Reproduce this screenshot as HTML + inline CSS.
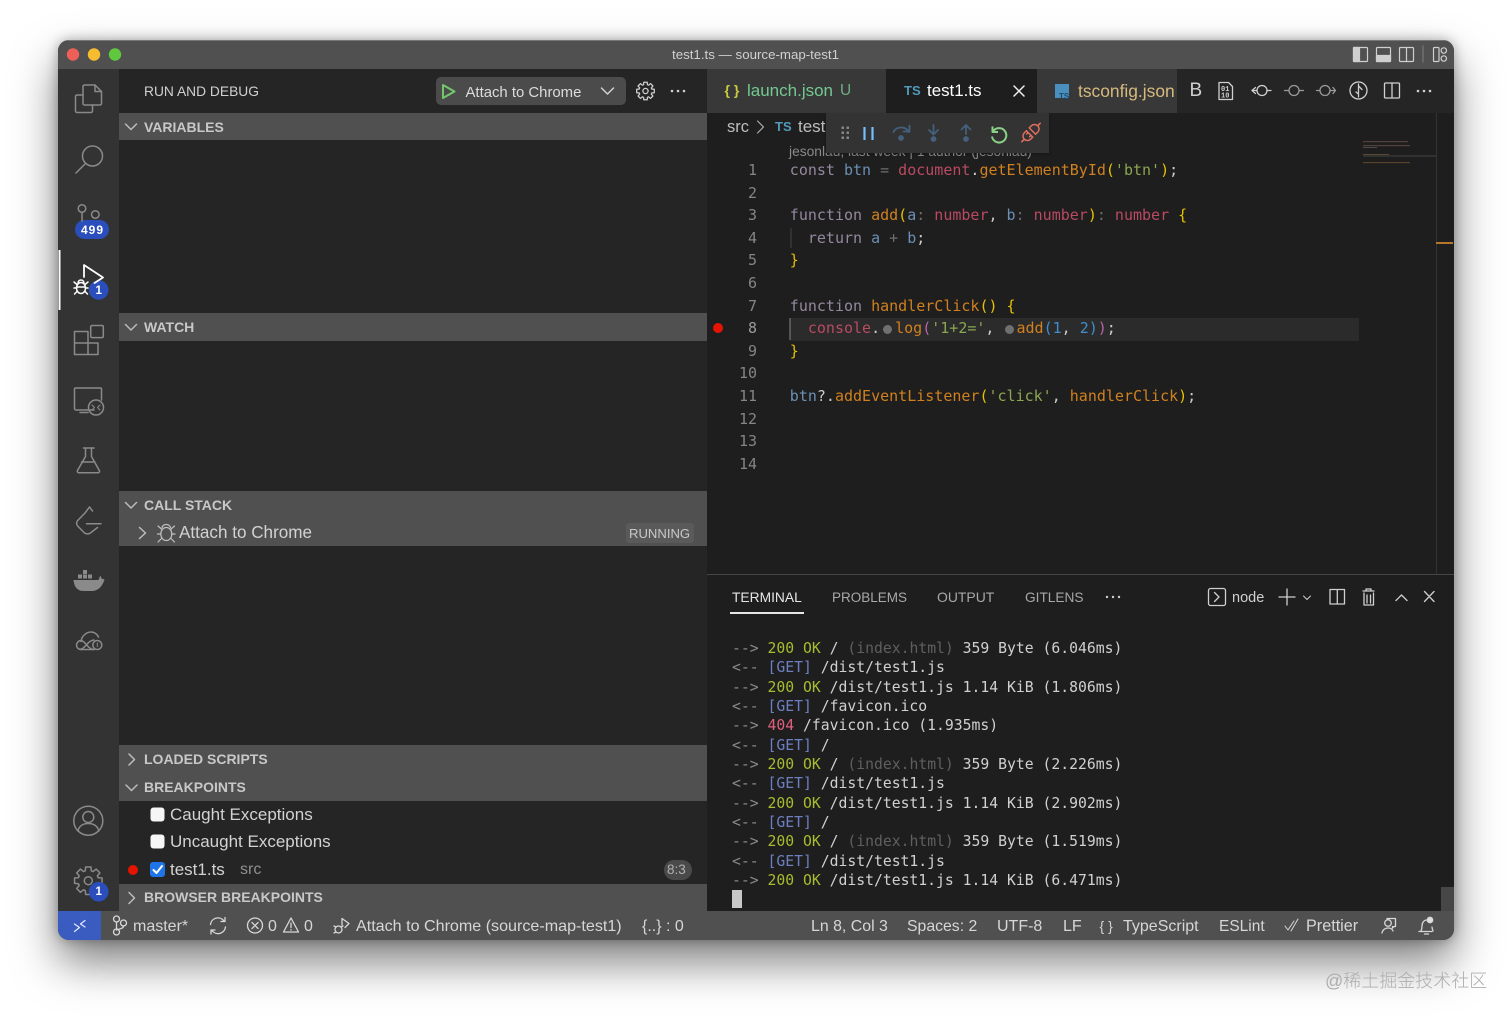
<!DOCTYPE html>
<html lang="en"><head><meta charset="utf-8"><title>VS Code</title>
<style>
*{box-sizing:border-box}
html,body{margin:0;padding:0;width:1512px;height:1017px;overflow:hidden;background:#fff}
body{position:relative;font-family:"Liberation Sans",sans-serif;color:#ccc}
.b{position:absolute}
.t{position:absolute;white-space:pre;line-height:20px;height:20px}
.h{position:absolute;left:144px;font-weight:bold;font-size:14px;color:#c8c8c8;line-height:20px;white-space:pre}
.s{font-size:16px;color:#d6d6d6;margin-top:-9.5px}
.c{position:absolute;left:789.8px;font:15px/22.6px "DejaVu Sans Mono",monospace;white-space:pre;color:#ccc}
.n{position:absolute;width:30px;left:727px;text-align:right;font:15px/22.6px "DejaVu Sans Mono",monospace;color:#858585}
.l{position:absolute;left:732px;font:14.75px/19.33px "DejaVu Sans Mono",monospace;white-space:pre;color:#d0d0d0;letter-spacing:-.01px;margin-top:.7px}
.k{color:#94889f}.o{color:#d0801f}.v{color:#6b8fb5}.r{color:#b94a62}.g{color:#8ba650}.y{color:#e5c100}.p{color:#6e6e6e}.m{color:#b565a8}.u{color:#3f8fd0}
.a{color:#8a8a8a}.q{color:#a8bc2e}.w{color:#6d7fc0}.x{color:#5f5f5f}.e{color:#e0607e}
.d{display:inline-block;width:9px;height:9px;border-radius:50%;background:#707070;vertical-align:-1px}
</style></head><body>
<div class="b" style="left:58px;top:40px;width:1396px;height:900px;border-radius:11px;background:#252525;box-shadow:0 22px 44px rgba(0,0,0,.5),0 0 12px rgba(0,0,0,.3);overflow:hidden">
<div class="b" style="left:0;top:0;width:1396px;height:29px;background:#505050;border-top:1px solid #777"></div>
<div class="b" style="left:0;top:29px;width:61px;height:842px;background:#333"></div>
<div class="b" style="left:61px;top:29px;width:588px;height:842px;background:#252525"></div>
<div class="b" style="left:61px;top:73px;width:588px;height:27px;background:#505050"></div>
<div class="b" style="left:61px;top:273px;width:588px;height:28px;background:#505050"></div>
<div class="b" style="left:61px;top:451px;width:588px;height:55px;background:#505050"></div>
<div class="b" style="left:61px;top:705px;width:588px;height:56px;background:#505050"></div>
<div class="b" style="left:61px;top:844px;width:588px;height:27px;background:#505050"></div>
<div class="b" style="left:649px;top:29px;width:747px;height:507px;background:#1e1e1e"></div>
<div class="b" style="left:649px;top:29px;width:747px;height:44px;background:#252525"></div>
<div class="b" style="left:649px;top:29px;width:470px;height:44px;background:#383838"></div>
<div class="b" style="left:828px;top:29px;width:151px;height:44px;background:#1e1e1e"></div>
<div class="b" style="left:732px;top:278px;width:569px;height:22.6px;background:#2b2b2b"></div>
<div class="b" style="left:649px;top:534px;width:747px;height:337px;background:#1e1e1e;border-top:1px solid #454545"></div>
<div class="b" style="left:1378px;top:73px;width:1px;height:461px;background:#333"></div>
<div class="b" style="left:1378px;top:202px;width:17px;height:2px;background:#b5762a"></div>
<div class="b" style="left:1383px;top:847px;width:13px;height:24px;background:#474747"></div>
<div class="b" style="left:0;top:871px;width:1396px;height:29px;background:#505050"></div>
<div class="b" style="left:0;top:871px;width:43px;height:29px;background:#3a5bc0"></div>
</div>
<div class="b" style="left:436px;top:77px;width:190px;height:28px;border-radius:5px;background:#4b4b4b"></div>
<div class="t" style="left:672px;top:45px;font-size:13.3px;color:#d0d0d0">test1.ts — source-map-test1</div>
<div class="t" style="left:144px;top:81.500px;font-size:13.8px;color:#d0d0d0">RUN AND DEBUG</div>
<div class="t" style="left:465.500px;top:82.500px;font-size:14.9px;color:#dcdcdc">Attach to Chrome</div>
<div class="h" style="top:117px">VARIABLES</div>
<div class="h" style="top:317px">WATCH</div>
<div class="h" style="top:495px">CALL STACK</div>
<div class="t" style="left:179px;top:523px;font-size:17.1px;color:#d2d2d2">Attach to Chrome</div>
<div class="b" style="left:626px;top:523px;width:68px;height:20px;border-radius:3px;background:#5a5a5a"></div>
<div class="t" style="left:629px;top:523.500px;font-size:13.1px;color:#c8c8c8">RUNNING</div>
<div class="h" style="top:749px">LOADED SCRIPTS</div>
<div class="h" style="top:777px">BREAKPOINTS</div>
<div class="t" style="left:170px;top:805px;font-size:17px;color:#d2d2d2">Caught Exceptions</div>
<div class="t" style="left:170px;top:832px;font-size:17px;color:#d2d2d2">Uncaught Exceptions</div>
<div class="t" style="left:170px;top:860px;font-size:17px;color:#d2d2d2">test1.ts</div>
<div class="t" style="left:240px;top:860px;font-size:16px;color:#8f8f8f">src</div>
<div class="b" style="left:664px;top:860px;width:28px;height:20px;border-radius:10px;background:#4a4a4a"></div>
<div class="t" style="left:667px;top:860px;font-size:13.5px;color:#b0b0b0">8:3</div>
<div class="h" style="top:887px">BROWSER BREAKPOINTS</div>
<div class="t" style="left:747px;top:81px;font-size:17px;color:#73c991">launch.json</div>
<div class="t" style="left:840px;top:81px;font-size:15.500px;color:#6fae85">U</div>
<div class="t" style="left:927px;top:81px;font-size:16.900px;color:#fff">test1.ts</div>
<div class="t" style="left:1078px;top:81px;font-size:17.400px;color:#d7ba7d">tsconfig.json</div>
<div class="t" style="left:904px;top:81px;font-size:13px;font-weight:bold;color:#519aba">TS</div>
<div class="t" style="left:724.500px;top:80px;font-size:14px;font-weight:bold;color:#cbcb41">{ }</div>
<div class="t" style="left:727px;top:117px;font-size:16.500px;color:#bdbdbd">src</div>
<div class="t" style="left:775px;top:117px;font-size:13px;font-weight:bold;color:#519aba">TS</div>
<div class="t" style="left:798px;top:117px;font-size:17px;color:#bdbdbd;width:28px;overflow:hidden">test1.ts</div>
<div class="b" style="left:1055px;top:84px;width:14px;height:14px;background:#4a8fbd"></div>
<div class="t" style="left:1059px;top:83px;font-size:8px;font-weight:bold;color:#1c4d6f;padding-top:4px">TS</div>
<div class="t" style="left:1189.500px;top:80.700px;font-size:19px;color:#d0d0d0">B</div>
<div class="t" style="left:789px;top:141.500px;font-size:13.800px;color:#8a8a8a">jesonlau, last week | 1 author (jesonlau)</div>
<div class="b" style="left:826px;top:113px;width:223px;height:39.500px;background:#333;box-shadow:0 1px 3px rgba(0,0,0,.25)"></div>
<div class="n" style="top:159px">1</div><div class="n" style="top:181.6px">2</div><div class="n" style="top:204.2px">3</div><div class="n" style="top:226.8px">4</div><div class="n" style="top:249.4px">5</div><div class="n" style="top:272px">6</div><div class="n" style="top:294.6px">7</div><div class="n" style="top:317.2px;color:#9a9a9a">8</div><div class="n" style="top:339.8px">9</div><div class="n" style="top:362.4px">10</div><div class="n" style="top:385px">11</div><div class="n" style="top:407.6px">12</div><div class="n" style="top:430.2px">13</div><div class="n" style="top:452.8px">14</div>
<div class="c" style="top:159px"><span class="k">const</span> <span class="v">btn</span> <span class="p">=</span> <span class="r">document</span>.<span class="o">getElementById</span><span class="y">(</span><span class="g">'btn'</span><span class="y">)</span>;</div>
<div class="c" style="top:204.2px"><span class="k">function</span> <span class="o">add</span><span class="y">(</span><span class="v">a</span><span class="p">:</span> <span class="r">number</span>, <span class="v">b</span><span class="p">:</span> <span class="r">number</span><span class="y">)</span><span class="p">:</span> <span class="r">number</span> <span class="y">{</span></div>
<div class="c" style="top:226.8px">  <span class="k">return</span> <span class="v">a</span> <span class="p">+</span> <span class="v">b</span>;</div>
<div class="c" style="top:249.4px"><span class="y">}</span></div>
<div class="c" style="top:294.6px"><span class="k">function</span> <span class="o">handlerClick</span><span class="y">()</span> <span class="y">{</span></div>
<div class="c" style="top:317.2px">  <span class="r">console</span>.<span style="display:inline-block;width:15px;text-align:center"><i class="d"></i></span><span class="o">log</span><span class="m">(</span><span class="g">'1+2='</span>, <span style="display:inline-block;width:13px;text-align:center"><i class="d"></i></span><span class="o">add</span><span class="u">(1</span>, <span class="u">2)</span><span class="m">)</span>;</div>
<div class="c" style="top:339.8px"><span class="y">}</span></div>
<div class="c" style="top:385px"><span class="v">btn</span>?.<span class="o">addEventListener</span><span class="y">(</span><span class="g">'click'</span>, <span class="o">handlerClick</span><span class="y">)</span>;</div>
<div class="t" style="left:732px;top:588px;font-size:13.800px;color:#e6e6e6">TERMINAL</div>
<div class="t" style="left:832px;top:588px;font-size:13.500px;color:#a8a8a8">PROBLEMS</div>
<div class="t" style="left:937px;top:587px;font-size:13.950px;color:#a8a8a8">OUTPUT</div>
<div class="t" style="left:1025px;top:588px;font-size:13.700px;color:#a8a8a8">GITLENS</div>
<div class="b" style="left:730px;top:612px;width:74px;height:1.500px;background:#e6e6e6"></div>
<div class="t" style="left:1232px;top:588px;font-size:14.500px;color:#d0d0d0">node</div>
<div class="l" style="top:638.5px"><span class="a">--&gt;</span> <span class="q">200 OK</span> / <span class="x">(index.html)</span> 359 Byte (6.046ms)</div>
<div class="l" style="top:657.8px"><span class="a">&lt;--</span> <span class="w">[GET]</span> /dist/test1.js</div>
<div class="l" style="top:677.2px"><span class="a">--&gt;</span> <span class="q">200 OK</span> /dist/test1.js 1.14 KiB (1.806ms)</div>
<div class="l" style="top:696.5px"><span class="a">&lt;--</span> <span class="w">[GET]</span> /favicon.ico</div>
<div class="l" style="top:715.8px"><span class="a">--&gt;</span> <span class="e">404</span> /favicon.ico (1.935ms)</div>
<div class="l" style="top:735.2px"><span class="a">&lt;--</span> <span class="w">[GET]</span> /</div>
<div class="l" style="top:754.5px"><span class="a">--&gt;</span> <span class="q">200 OK</span> / <span class="x">(index.html)</span> 359 Byte (2.226ms)</div>
<div class="l" style="top:773.8px"><span class="a">&lt;--</span> <span class="w">[GET]</span> /dist/test1.js</div>
<div class="l" style="top:793.2px"><span class="a">--&gt;</span> <span class="q">200 OK</span> /dist/test1.js 1.14 KiB (2.902ms)</div>
<div class="l" style="top:812.5px"><span class="a">&lt;--</span> <span class="w">[GET]</span> /</div>
<div class="l" style="top:831.8px"><span class="a">--&gt;</span> <span class="q">200 OK</span> / <span class="x">(index.html)</span> 359 Byte (1.519ms)</div>
<div class="l" style="top:851.2px"><span class="a">&lt;--</span> <span class="w">[GET]</span> /dist/test1.js</div>
<div class="l" style="top:870.5px"><span class="a">--&gt;</span> <span class="q">200 OK</span> /dist/test1.js 1.14 KiB (6.471ms)</div>
<div class="b" style="left:732px;top:890px;width:10px;height:18px;background:#c8c8c8"></div>
<div class="t s" style="left:133px;top:926px">master*</div>
<div class="t s" style="left:268px;top:926px">0</div>
<div class="t s" style="left:304px;top:926px">0</div>
<div class="t s" style="left:356px;top:925px;font-size:16.100px">Attach to Chrome (source-map-test1)</div>
<div class="t s" style="left:642px;top:926px">{..} : 0</div>
<div class="t s" style="left:811px;top:926px;font-size:15.900px">Ln 8, Col 3</div>
<div class="t s" style="left:907px;top:926px;font-size:15.800px">Spaces: 2</div>
<div class="t s" style="left:997px;top:926px">UTF-8</div>
<div class="t s" style="left:1063px;top:926px">LF</div>
<div class="t s" style="left:1099.500px;top:925px;font-size:14px">{ }</div>
<div class="t s" style="left:1123px;top:926px">TypeScript</div>
<div class="t s" style="left:1219px;top:926px;font-size:15.500px">ESLint</div>
<div class="t s" style="left:1306px;top:925px;font-size:16.200px">Prettier</div>
<div class="b" style="left:75px;top:220px;width:33.500px;height:19px;border-radius:10px;background:#2a4fbd"></div>
<div class="t" style="left:81px;top:220px;font-size:12px;font-weight:bold;color:#fff;letter-spacing:1px">499</div>
<div class="t" style="left:1325px;top:971px;font-size:18px;color:#adadad;font-family:'Liberation Sans','Noto Sans CJK SC',sans-serif;font-weight:300">@稀土掘金技术社区</div>
<svg class="b" style="left:0;top:0" width="1512" height="1017" viewBox="0 0 1512 1017" fill="none" stroke="#8f8f8f" stroke-width="1.5" stroke-linecap="round" stroke-linejoin="round">
<defs><path id="gr" d="M-2.67-13.74L2.67-13.74 3.01-9.85 4.84-9.09 7.83-11.61 11.61-7.83 9.09-4.84 9.85-3.01 13.74-2.67 13.74 2.67 9.85 3.01 9.09 4.84 11.61 7.83 7.83 11.61 4.84 9.09 3.01 9.85 2.67 13.74-2.67 13.74-3.01 9.85-4.84 9.09-7.83 11.61-11.61 7.83-9.09 4.84-9.85 3.01-13.74 2.67-13.74-2.67-9.85-3.01-9.09-4.84-11.61-7.83-7.83-11.61-4.84-9.09-3.01-9.85z"/></defs>
<circle cx="73" cy="54.500" r="6.200" fill="#ee5f57" stroke="none"/><circle cx="94" cy="54.500" r="6.200" fill="#f5bd2f" stroke="none"/><circle cx="115" cy="54.500" r="6.200" fill="#5fc83f" stroke="none"/>
<g stroke="#cfcfcf" stroke-width="1.200"><rect x="1353.500" y="47.500" width="14" height="14" rx="1"/><rect x="1353.500" y="47.500" width="6" height="14" fill="#cfcfcf"/><rect x="1376.500" y="47.500" width="14" height="14" rx="1"/><rect x="1376.500" y="55.500" width="14" height="6" fill="#cfcfcf"/><rect x="1399.500" y="47.500" width="14" height="14" rx="1"/><path d="M1406.500 47.500v14"/><path d="M1423 46v16" stroke="#777"/><rect x="1433.500" y="47.500" width="5.500" height="14" rx="1"/><circle cx="1443.800" cy="50.500" r="2.700"/><circle cx="1443.800" cy="58.500" r="2.700"/></g>
<g stroke="#8a8a8a"><path d="M83 86.500a1.500 1.500 0 0 1 1.500-1.500H95l6.500 6.500V103.500a1.500 1.500 0 0 1-1.500 1.500H84.500a1.500 1.500 0 0 1-1.500-1.500z"/><path d="M95 85V91.500h6.500"/><path d="M83 95H77a1.500 1.500 0 0 0-1.500 1.500V111a1.500 1.500 0 0 0 1.500 1.500H91a1.500 1.500 0 0 0 1.500-1.500v-6"/><circle cx="92.500" cy="156" r="10"/><path d="M85 164L76 173"/><circle cx="82" cy="208.500" r="3.800"/><circle cx="95.300" cy="214.500" r="3.800"/><path d="M82 212.500V221"/>
<path d="M92 325.500h10a1.300 1.300 0 0 1 1.300 1.300v9.500a1.300 1.300 0 0 1-1.300 1.300h-10a1.300 1.300 0 0 1-1.300-1.300v-9.500a1.300 1.300 0 0 1 1.300-1.300zM74.500 331.500h13.500v23h-13.500zM88 343h10v11.500h-10zM74.500 343H88"/><path d="M94 410H76a1.500 1.500 0 0 1-1.500-1.500V389a1 1 0 0 1 1-1H100.500a1 1 0 0 1 1 1v11"/><path d="M80 412.500h8"/><circle cx="96" cy="407.500" r="7.500"/><path d="M92 405l2.500 2.500-2.500 2.500M100 405l-2.500 2.500 2.500 2.500" stroke-width="1.100"/>
<path d="M83.500 448H94M85.500 448v8.500l-8 14a1.500 1.500 0 0 0 1.300 2.300H98a1.500 1.500 0 0 0 1.300-2.300l-7.800-14V448M81.500 462h13.500"/><path d="M89.500 507l3 4M89.500 507l-4.500 6-7.300 7.500a4 4 0 0 0 0 5.500l6.300 6.500a5 5 0 0 0 7 0l6.500-5M86.500 523.700H101"/>
<path d="M81 641.500c.5-5 5-9.500 10-9.500 3.500 0 6 2 7.500 5"/><path d="M81 649.500c-3 0-4.500-2.500-4.500-4.500s2-4.500 4.500-4.500c4 0 7 9 13 9"/><path d="M81 649.500H94M81 649c4 0 7-9 13-9"/><circle cx="97.300" cy="645" r="4.500" fill="#333"/><path d="M97.300 643v3.500" stroke-width="1"/><circle cx="88.300" cy="820.700" r="14.500"/><circle cx="88.300" cy="817" r="5.500"/><path d="M78 831c1-5 5-7.500 10.300-7.500S97.800 826 98.800 831"/></g>
<path d="M74 580h25c.8-2.500 2-4.500 2-4.500l1 3 3 1c-1.500 5-5 11-12 11.500H84c-7 0-9.500-5.500-10-11z" fill="#8a8a8a" stroke="none" transform="translate(-.5 0)"/>
<path d="M78 574.500h4v4h-4zM83 574.500h4v4h-4zM88 574.500h4v4h-4zM83 570h4v4h-4z" fill="#8a8a8a" stroke="none"/>
<g stroke="#8a8a8a"><use href="#gr" transform="translate(88.300 880.700)"/><circle cx="88.300" cy="880.700" r="4"/></g>
<circle cx="98.700" cy="290" r="9.800" fill="#2a4fbd" stroke="none"/><circle cx="98.700" cy="891.700" r="9.800" fill="#2a4fbd" stroke="none"/>
<path d="M59.500 250v60" stroke="#fff" stroke-width="2" stroke-linecap="butt"/>
<path d="M84 277v-12l19 12.500-8.500 5.500" stroke="#fff" stroke-width="1.800"/>
<g stroke="#fff" stroke-width="1.500"><ellipse cx="81" cy="288" rx="4.500" ry="5.500"/><path d="M76.500 287h9M74 282l3 2.500M88 282l-3 2.500M74 288h2.500M88 288h-2.500M74.500 294l2.500-2.500M87.500 294l-2.500-2.500M78 283a3 3 0 0 1 6 0"/></g>
<g stroke="#bcbcbc"><path d="M125.500 124l5.500 5.500 5.500-5.500M125.500 324.500l5.500 5.500 5.500-5.500M125.500 502.500l5.500 5.500 5.500-5.500M126 785l5.500 5.500 5.500-5.500"/><path d="M129 754l5.500 5.500-5.500 5.500M129 892.500l5.500 5.500-5.500 5.500M139.500 527.500l6 5.500-6 5.500"/></g>
<g stroke="#c0c0c0" stroke-width="1.200"><ellipse cx="166.300" cy="534" rx="5.500" ry="6.500"/><path d="M162 527.500a4.500 4.500 0 0 1 8.500 0M158 526l4 3.500M174.500 526l-4 3.500M157.500 534h3.500M175 534h-3.500M158 542l3.500-3.500M174.500 542l-3.500-3.500"/></g>
<path d="M443 85l11.500 6.500L443 98z" stroke="#73c76b" stroke-width="2"/>
<path d="M601.500 88l6 6 6-6" stroke="#d0d0d0"/>
<g stroke="#cfcfcf" stroke-width="2"><use href="#gr" transform="translate(645.500 91) scale(.64)"/></g><circle cx="645.500" cy="91" r="2.600" stroke="#cfcfcf" stroke-width="1.300"/>
<g fill="#cfcfcf" stroke="none"><circle cx="672" cy="91" r="1.300"/><circle cx="678" cy="91" r="1.300"/><circle cx="684" cy="91" r="1.300"/><circle cx="1418" cy="91" r="1.300"/><circle cx="1424" cy="91" r="1.300"/><circle cx="1430" cy="91" r="1.300"/><circle cx="1107" cy="597" r="1.200"/><circle cx="1113" cy="597" r="1.200"/><circle cx="1119" cy="597" r="1.200"/></g>
<path d="M1014 86l10 10M1024 86l-10 10" stroke="#f0f0f0" stroke-width="1.500"/>
<path d="M757.500 121l6 6-6 6" stroke="#aaa" stroke-width="1.200"/>
<g stroke="#d0d0d0" stroke-width="1.300"><path d="M1219 82.500h9.500l4 4v13h-13.500z"/><path d="M1252 90.500l3.500-3M1252 90.500l3.500 3"/><circle cx="1262" cy="90.500" r="5"/><path d="M1252 90.500h5M1267 90.500h4"/></g>
<text x="1221" y="91" font-family="Liberation Mono" font-weight="bold" font-size="7" fill="#d0d0d0" stroke="none">01</text><text x="1221" y="97.500" font-family="Liberation Mono" font-weight="bold" font-size="7" fill="#d0d0d0" stroke="none">10</text>
<g stroke="#9a9a9a" stroke-width="1.300"><circle cx="1294" cy="90.500" r="5"/><path d="M1284.500 90.500h4.500M1299 90.500h4.500"/><circle cx="1325" cy="90.500" r="5"/><path d="M1316.500 90.500h3.500M1330 90.500h5.500l-2.500-3M1335.500 90.500l-2.500 3"/></g>
<g stroke="#d0d0d0" stroke-width="1.300"><circle cx="1358.500" cy="90.500" r="8.500"/><path d="M1358.500 84v13M1358.500 86l3.500 3.500M1358.500 94l-2.500-2"/><rect x="1384.500" y="83" width="15" height="15" rx="1"/><path d="M1392 83v15"/></g>
<g stroke="none" opacity=".8"><rect x="1363" y="141" width="45" height="1.200" fill="#5f4a45"/><rect x="1363" y="145" width="47" height="1.200" fill="#5f4a45"/><rect x="1363" y="147" width="14" height="1" fill="#555"/><rect x="1363" y="154" width="26" height="1" fill="#6a5535"/><rect x="1363" y="155" width="73" height="2" fill="#363636"/><rect x="1363" y="162" width="47" height="1.200" fill="#6a4a2a"/></g>
<g stroke="#888" stroke-width="1" fill="#888"><path d="M842 127h1.500v1.500h-1.500zM847 127h1.500v1.500h-1.500zM842 132h1.500v1.500h-1.500zM847 132h1.500v1.500h-1.500zM842 137h1.500v1.500h-1.500zM847 137h1.500v1.500h-1.500z"/></g>
<path d="M864.500 127v13M872.500 127v13" stroke="#75beff" stroke-width="2.200" stroke-linecap="butt"/>
<g stroke="#44607c" stroke-width="1.800"><path d="M893.500 132c2-5 11-7 15.500 0M909.500 125.500v6h-6"/><circle cx="901" cy="138" r="2" fill="#44607c"/><path d="M933.500 125v9M929 130l4.500 4.500 4.500-4.500"/><circle cx="933.500" cy="139" r="2" fill="#44607c"/><path d="M966 134v-9M961.500 129.500l4.500-4.500 4.500 4.500"/><circle cx="966" cy="139" r="2" fill="#44607c"/></g>
<path d="M992.500 126.500v5.500h5.500M993 131.500a7.200 7.200 0 1 1-1 5" stroke="#89d185" stroke-width="2" stroke-linecap="butt"/>
<g stroke="#e0705f" stroke-width="1.500" transform="rotate(-45 1031 132.500)"><path d="M1029 128h-3a4.500 4.500 0 0 0 0 9h3zM1033 128h3a4.500 4.500 0 0 1 0 9h-3zM1021.500 132.500H1018M1040.500 132.500h3.500M1029 130.500h-2M1029 134.500h-2"/></g>
<path d="M791 228v20" stroke="#444" stroke-width="1" stroke-linecap="butt"/><path d="M790 318v22" stroke="#777" stroke-width="1.200" stroke-linecap="butt"/>
<circle cx="718" cy="328" r="5" fill="#e51400" stroke="none"/><circle cx="133" cy="870" r="5" fill="#e51400" stroke="none"/>
<rect x="150.500" y="807.500" width="14" height="14" rx="3" fill="#f6f6f6" stroke="none"/><rect x="150.500" y="834.500" width="14" height="14" rx="3" fill="#f6f6f6" stroke="none"/><rect x="150" y="862" width="15" height="15" rx="3" fill="#1f74e8" stroke="none"/><path d="M153.500 870l3 3 5.500-7" stroke="#fff" stroke-width="2"/>
<g stroke="#cfcfcf" stroke-width="1.300"><rect x="1208.500" y="588.500" width="17" height="17" rx="2"/><path d="M1214.500 592.500l4.500 4.500-4.500 4.500M1287 589v16M1279 597h16M1330 589.500h14.500v14.500h-14.500zM1337.300 589.500v14.500"/><path d="M1303.500 596l3.500 3.500 3.500-3.500" stroke-width="1"/><path d="M1363 591h11M1366 591v-2h5v2M1364 593v12h9.500v-12M1367 595v8M1370.500 595v8M1396 600.500l5.500-5.500 5.500 5.500M1424.500 591.500l9.500 10M1434 591.500l-9.500 10"/></g>
<g stroke="#d8d8d8" stroke-width="1.300"><path d="M74.500 924l5 3.500-5 4M85 920.500l-4.500 3.500 4.500 3" stroke="#dfe6ff"/><circle cx="116.500" cy="919" r="3"/><circle cx="116.500" cy="932" r="3"/><circle cx="123.500" cy="923" r="3"/><path d="M116.500 922v7M123.500 926c0 3-5 3-7 4"/><path d="M210.500 924.500a7.500 7.500 0 0 1 13.500-3.500M225.500 927a7.500 7.500 0 0 1-13.500 3.500M225 917.500v4h-4M211 934v-4h4"/><circle cx="255" cy="925.500" r="7.500"/><path d="M252 922.500l6 6M258 922.500l-6 6M291 918l7.500 14h-15zM291 923v4.500M291 929.500v.5"/><path d="M342 925v-6.500l7 5-4 4"/><ellipse cx="338.500" cy="929.500" rx="3.500" ry="3.500"/><path d="M334 926l2 1M334 933l2-1M343 926l-2 1"/><path d="M1285 926l3 4 6-9M1291 931l7-12" stroke-width="1"/><circle cx="1388" cy="923" r="3.300"/><path d="M1382 933c.5-3 3-5 6-5s4 1 5 3M1387 918.500h8.500v8h-1.500l-1.500 1.500v-1.500"/><path d="M1421 931c1-2 1-3 1-5s1-6 5-6M1419 931.500h13M1424.500 934h4M1432 927c0 2 1 3 1 4"/><circle cx="1430" cy="920" r="2.700" fill="#e0e0e0"/></g>
</svg>
<div class="t" style="left:95.500px;top:280.700px;font-size:11.500px;font-weight:bold;color:#fff">1</div>
<div class="t" style="left:95.500px;top:882.400px;font-size:11.500px;font-weight:bold;color:#fff">1</div>
</body></html>
